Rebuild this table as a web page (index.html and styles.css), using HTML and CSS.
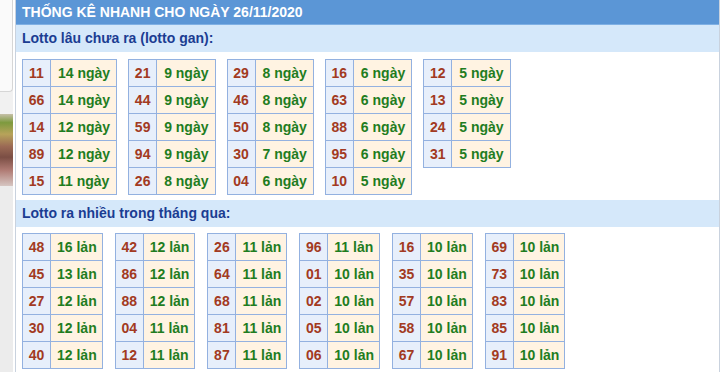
FILE: index.html
```html
<!DOCTYPE html>
<html lang="vi">
<head>
<meta charset="utf-8">
<title>Thống kê nhanh</title>
<link rel="stylesheet" href="styles.css">
</head>
<body>
<div class="page">
  <aside class="side">
    <div class="side-box"></div>
    <div class="side-img"></div>
    <div class="side-rest"></div>
  </aside>
  <main class="panel">
    <div class="title">THỐNG KÊ NHANH CHO NGÀY 26/11/2020</div>
    <div class="sub">Lotto lâu chưa ra (lotto gan):</div>
    <div class="tables gan">
      <table class="lt"><tr><td class="n">11</td><td class="v">14 ngày</td></tr><tr><td class="n">66</td><td class="v">14 ngày</td></tr><tr><td class="n">14</td><td class="v">12 ngày</td></tr><tr><td class="n">89</td><td class="v">12 ngày</td></tr><tr><td class="n">15</td><td class="v">11 ngày</td></tr></table>
      <table class="lt"><tr><td class="n">21</td><td class="v">9 ngày</td></tr><tr><td class="n">44</td><td class="v">9 ngày</td></tr><tr><td class="n">59</td><td class="v">9 ngày</td></tr><tr><td class="n">94</td><td class="v">9 ngày</td></tr><tr><td class="n">26</td><td class="v">8 ngày</td></tr></table>
      <table class="lt"><tr><td class="n">29</td><td class="v">8 ngày</td></tr><tr><td class="n">46</td><td class="v">8 ngày</td></tr><tr><td class="n">50</td><td class="v">8 ngày</td></tr><tr><td class="n">30</td><td class="v">7 ngày</td></tr><tr><td class="n">04</td><td class="v">6 ngày</td></tr></table>
      <table class="lt"><tr><td class="n">16</td><td class="v">6 ngày</td></tr><tr><td class="n">63</td><td class="v">6 ngày</td></tr><tr><td class="n">88</td><td class="v">6 ngày</td></tr><tr><td class="n">95</td><td class="v">6 ngày</td></tr><tr><td class="n">10</td><td class="v">5 ngày</td></tr></table>
      <table class="lt"><tr><td class="n">12</td><td class="v">5 ngày</td></tr><tr><td class="n">13</td><td class="v">5 ngày</td></tr><tr><td class="n">24</td><td class="v">5 ngày</td></tr><tr><td class="n">31</td><td class="v">5 ngày</td></tr></table>
    </div>
    <div class="sub">Lotto ra nhiều trong tháng qua:</div>
    <div class="tables lan">
      <table class="lt"><tr><td class="n">48</td><td class="v">16 lản</td></tr><tr><td class="n">45</td><td class="v">13 lản</td></tr><tr><td class="n">27</td><td class="v">12 lản</td></tr><tr><td class="n">30</td><td class="v">12 lản</td></tr><tr><td class="n">40</td><td class="v">12 lản</td></tr></table>
      <table class="lt"><tr><td class="n">42</td><td class="v">12 lản</td></tr><tr><td class="n">86</td><td class="v">12 lản</td></tr><tr><td class="n">88</td><td class="v">12 lản</td></tr><tr><td class="n">04</td><td class="v">11 lản</td></tr><tr><td class="n">12</td><td class="v">11 lản</td></tr></table>
      <table class="lt"><tr><td class="n">26</td><td class="v">11 lản</td></tr><tr><td class="n">64</td><td class="v">11 lản</td></tr><tr><td class="n">68</td><td class="v">11 lản</td></tr><tr><td class="n">81</td><td class="v">11 lản</td></tr><tr><td class="n">87</td><td class="v">11 lản</td></tr></table>
      <table class="lt"><tr><td class="n">96</td><td class="v">11 lản</td></tr><tr><td class="n">01</td><td class="v">10 lản</td></tr><tr><td class="n">02</td><td class="v">10 lản</td></tr><tr><td class="n">05</td><td class="v">10 lản</td></tr><tr><td class="n">06</td><td class="v">10 lản</td></tr></table>
      <table class="lt"><tr><td class="n">16</td><td class="v">10 lản</td></tr><tr><td class="n">35</td><td class="v">10 lản</td></tr><tr><td class="n">57</td><td class="v">10 lản</td></tr><tr><td class="n">58</td><td class="v">10 lản</td></tr><tr><td class="n">67</td><td class="v">10 lản</td></tr></table>
      <table class="lt"><tr><td class="n">69</td><td class="v">10 lản</td></tr><tr><td class="n">73</td><td class="v">10 lản</td></tr><tr><td class="n">83</td><td class="v">10 lản</td></tr><tr><td class="n">85</td><td class="v">10 lản</td></tr><tr><td class="n">91</td><td class="v">10 lản</td></tr></table>
    </div>
  </main>
</div>
</body>
</html>
```
FILE: styles.css
```css
html, body {
  margin: 0;
  padding: 0;
  background: #ffffff;
}
body {
  font-family: "Liberation Sans", Arial, sans-serif;
  font-size: 14px;
}
.page {
  display: flex;
  width: 724px;
  height: 372px;
  overflow: hidden;
}
.side {
  width: 13px;
  margin-right: 2px;
  display: flex;
  flex-direction: column;
  background: #f1f1f1;
}
.side-box {
  height: 92px;
  background: #fafafa;
  border-right: 1px solid #d6d6d6;
  border-bottom: 1px solid #d6d6d6;
  border-bottom-right-radius: 4px;
  box-sizing: border-box;
}
.side-img {
  margin-top: 22px;
  height: 72px;
  background: linear-gradient(180deg, #c6c0a8 0%, #7d9a3e 12%, #b7a35a 28%, #9b6a55 45%, #7b4e44 60%, #b07b74 78%, #d6c6c2 100%);
}
.side-rest {
  flex: 1;
  background: #ececec;
}
.panel {
  width: 703px;
  border-left: 1px solid #c9d2de;
  border-right: 1px solid #c9d2de;
  display: flex;
  flex-direction: column;
  align-items: stretch;
}
.title {
  height: 25px;
  line-height: 25px;
  background: #5b96d6;
  color: #ffffff;
  font-weight: bold;
  padding-left: 6px;
  border-bottom: 1px solid #7fb0e4;
  box-sizing: border-box;
}
.sub {
  height: 27px;
  line-height: 27px;
  background: #d5e8fa;
  color: #1b3d92;
  font-weight: bold;
  padding-left: 6px;
}
.tables {
  display: flex;
  align-items: flex-start;
  gap: 11px;
  padding: 7px 0 5px 6px;
}
.tables.lan {
  gap: 12px;
  padding-top: 6px;
}
.lt {
  border-collapse: collapse;
  font-weight: bold;
}
.lt td {
  border: 1px solid #93b1e0;
  height: 27px;
  padding: 0;
  box-sizing: border-box;
}
.lt .n {
  width: 28px;
  text-align: center;
  background: #e7effb;
  color: #a23a22;
}
.lt .v {
  padding: 0 6px 0 7px;
  background: #fff3e2;
  color: #1f7d1f;
  white-space: nowrap;
}
.tables.lan .v {
  padding: 0 5px 0 6px;
}
```
